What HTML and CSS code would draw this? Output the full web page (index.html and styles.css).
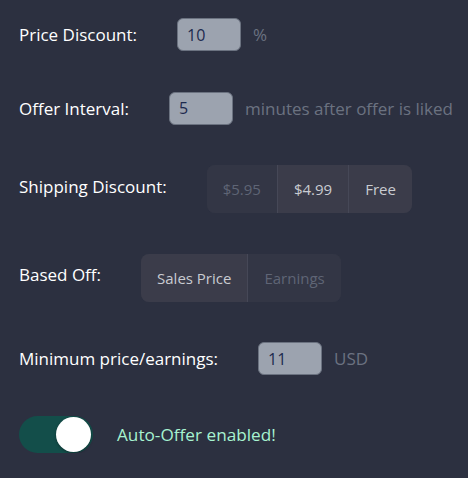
FILE: index.html
```html
<!DOCTYPE html>
<html>
<head>
<meta charset="utf-8">
<link rel="stylesheet" href="styles.css">
</head>
<body>
<div class="panel">
  <div class="row">
    <span class="label">Price Discount:</span>
    <input class="num" type="text" value="10">
    <span class="unit">%</span>
  </div>
  <div class="row">
    <span class="label">Offer Interval:</span>
    <input class="num" type="text" value="5">
    <span class="unit">minutes after offer is liked</span>
  </div>
  <div class="row">
    <span class="label label-up">Shipping Discount:</span>
    <div class="group">
      <button class="seg dim">$5.95</button>
      <button class="seg on">$4.99</button>
      <button class="seg on">Free</button>
    </div>
  </div>
  <div class="row">
    <span class="label label-up">Based Off:</span>
    <div class="group">
      <button class="seg on">Sales Price</button>
      <button class="seg dim">Earnings</button>
    </div>
  </div>
  <div class="row">
    <span class="label">Minimum price/earnings:</span>
    <input class="num" type="text" value="11">
    <span class="unit">USD</span>
  </div>
  <div class="row toggle-row">
    <div class="toggle"><div class="knob"></div></div>
    <span class="status">Auto-Offer enabled!</span>
  </div>
</div>
</body>
</html>
```
FILE: styles.css
```css
html, body {
  margin: 0;
  padding: 0;
  background: #2c3040;
}
body {
  font-family: "Open Sans", "Noto Sans", sans-serif;
  font-size: 17px;
  color: #ffffff;
}
.panel {
  display: flex;
  flex-direction: column;
  gap: 40.6px;
  padding: 18px 0 0 19px;
}
.row {
  display: flex;
  align-items: center;
}
.label {
  margin-right: 40px;
  color: #ffffff;
}
.label-up {
  margin-bottom: 6px;
}
.num {
  box-sizing: border-box;
  width: 64px;
  height: 33px;
  border: 1px solid #6b7280;
  border-radius: 6px;
  background: #9ca3af;
  color: #1c2a4e;
  font-family: inherit;
  font-size: 16px;
  padding: 0 9px;
  outline: none;
}
.unit {
  margin-left: 12px;
  color: #6b7280;
}
.group {
  display: flex;
  height: 48px;
  border-radius: 8px;
  overflow: hidden;
  background: #333645;
}
.seg {
  border: none;
  margin: 0;
  padding: 0 16px;
  font-family: inherit;
  font-size: 15px;
  background: #333645;
  color: #5f6575;
}
.seg + .seg {
  border-left: 1px solid #464857;
}
.seg.on {
  background: #3b3c4a;
  color: #c9cbd1;
}
.toggle-row {
  gap: 24px;
}
.toggle {
  box-sizing: border-box;
  width: 74px;
  height: 37px;
  border-radius: 19px;
  background: #134e4a;
  display: flex;
  align-items: center;
  justify-content: flex-end;
  padding-right: 2px;
}
.knob {
  width: 35px;
  height: 35px;
  border-radius: 50%;
  background: #ffffff;
  box-shadow: 0 1px 3px rgba(0,0,0,0.35);
}
.status {
  color: #a7f3d0;
  font-size: 17.2px;
}
```
